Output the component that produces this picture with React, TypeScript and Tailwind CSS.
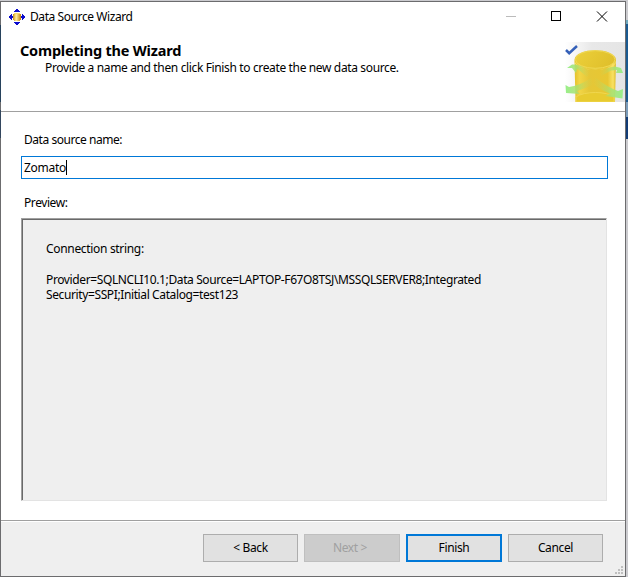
import React from "react";

function AppIcon() {
  return (
    <svg width="16" height="16" viewBox="0 0 16 16" className="ml-2" shapeRendering="crispEdges">
      <defs>
        <linearGradient id="core" x1="0" x2="1">
          <stop offset="0" stopColor="#c98a10" />
          <stop offset="0.4" stopColor="#fff0a0" />
          <stop offset="1" stopColor="#c07c08" />
        </linearGradient>
      </defs>
      <g fill="#0c0ccc">
        <path d="M7 0h2v1h1v1h1v1H5V2h1V1h1zM7 16h2v-1h1v-1h1v-1H5v1h1v1h1z" />
        <path d="M0 7h1V6h1V5h1v2h1v2H3v2H2v-1H1V9H0zM16 7h-1V6h-1V5h-1v2h-1v2h1v2h1v-1h1V9h1z" />
      </g>
      <path d="M5 4h6v1h1v6h-1v1H5v-1H4V5h1z" fill="url(#core)" />
      <path d="M5 4h6v1H5z" fill="#f7d869" />
    </svg>
  );
}

function Banner() {
  return (
    <svg width="60" height="60" viewBox="0 0 60 60" className="shrink-0">
      <defs>
        <linearGradient id="bg" x1="0" x2="1">
          <stop offset="0" stopColor="#fff" />
          <stop offset="0.45" stopColor="#e8e8e8" />
          <stop offset="1" stopColor="#e5e5e5" />
        </linearGradient>
        <linearGradient id="body" x1="0" x2="1">
          <stop offset="0" stopColor="#e4c02a" />
          <stop offset="0.12" stopColor="#f2d546" />
          <stop offset="0.35" stopColor="#e5c737" />
          <stop offset="0.8" stopColor="#e8c732" />
          <stop offset="0.93" stopColor="#f9e164" />
          <stop offset="1" stopColor="#dcb824" />
        </linearGradient>
        <linearGradient id="lid" x1="0" x2="1" y2="0.3">
          <stop offset="0" stopColor="#ecd03a" />
          <stop offset="1" stopColor="#e0c02c" />
        </linearGradient>
        <linearGradient id="gl" x1="0" x2="1">
          <stop offset="0" stopColor="#98ef8a" />
          <stop offset="0.4" stopColor="#a9e070" stopOpacity="0.85" />
          <stop offset="1" stopColor="#d7cc48" stopOpacity="0" />
        </linearGradient>
        <linearGradient id="gr" x1="1" x2="0">
          <stop offset="0" stopColor="#98ef8a" />
          <stop offset="0.4" stopColor="#a9e070" stopOpacity="0.85" />
          <stop offset="1" stopColor="#d7cc48" stopOpacity="0" />
        </linearGradient>
      </defs>
      <path d="M0 0h60v60H0z" fill="url(#bg)" />
      <path d="M9.5 18C9.5 5 51 5 51 18L50 60H10.5z" fill="url(#body)" />
      <path d="M9.5 18c1 13 40.5 13 41.500 0v2c-1 10-40.5 10-41.500 0z" fill="#f6e36c" />
      <ellipse cx="30.2" cy="17.5" rx="19.8" ry="8.8" fill="url(#lid)" stroke="#efd853" />
      <path d="M11 60v-5c8-6 31-6 38 0v5z" fill="#e8cb30" stroke="#f0d74f" />
      <path d="M2 26L7 22.5Q14 22 20 26L26 30 22 35 14 28 12 27 11 31 7 26z" fill="url(#gl)" />
      <path d="M58 31L56 26 50 24.500Q42 25 34 29L36 34 46 28.500 52 28 51 31z" fill="url(#gr)" />
      <path d="M0.500 43L4 45Q14 44 26 36L29 42Q20 47 12 49L15 52 1 51z" fill="url(#gl)" />
      <path d="M58 47L57.500 56.500 40 54 45 51.500Q35 48 27 41L31 36Q42 45 53 49z" fill="url(#gr)" />
      <path d="M1 8l3.200 3.200L12 4" fill="none" stroke="#3560b8" strokeWidth="2.5" />
    </svg>
  );
}

const button = "flex h-7 items-center justify-center border pb-px";

export default function App() {
  return (
    <div
      className="flex h-[577px] w-[628px] bg-[#cbcbcf] pt-px text-[12px] leading-[15px] text-black"
      style={{ fontFamily: '"Noto Sans", "Open Sans", sans-serif' }}
    >
      <div className="flex w-px flex-col bg-[#6c6c6e]">
        <div className="mt-6 h-[77px] bg-[#27425c]" />
        <div className="mt-2 h-[28px] bg-[#33465e]" />
      </div>
      <div className="flex w-[625px] flex-col border border-l-0 border-[#6c6c6e] bg-white whitespace-nowrap">
        <div className="flex h-[29px] items-center">
          <AppIcon />
          <div className="ml-[5px] flex-1 tracking-[-0.42px]">Data Source Wizard</div>
          <svg width="102" height="11" viewBox="0 0 102 11" className="mr-[17px]" fill="none" shapeRendering="crispEdges">
            <path d="M0 5.5h10" stroke="#bbb" />
            <path d="M45.5.5h9v9h-9z" stroke="#000" />
            <path d="M91 .5l10 10M101 .5l-10 10" stroke="#000" shapeRendering="auto" />
          </svg>
        </div>
        <div className="flex h-[81px] border-b border-[#a0a0a0] pt-[11px]">
          <div className="flex-1 pl-[19px]">
            <div className="-mt-px mb-px text-[14.5px] leading-[18px] font-bold tracking-[-0.2px]">Completing the Wizard</div>
            <div className="pl-[25px] tracking-[-0.36px]">Provide a name and then click Finish to create the new data source.</div>
          </div>
          <Banner />
        </div>
        <div className="flex h-[409px] flex-col border-b border-[#a0a0a0] pl-5">
          <div className="mt-5 ml-[3px] tracking-[-0.46px]">Data source name:</div>
          <div className="mt-[9px] flex h-[23px] w-[587px] items-center border border-[#0078d7] pl-[2px]">
            <span className="tracking-[-0.3px]">Zomato</span>
            <span className="h-[15px] w-px bg-black" />
          </div>
          <div className="mt-4 ml-[3px] tracking-[-0.42px]">Preview:</div>
          <div className="mt-2 h-[283px] w-[586px] border border-t-[#a0a0a0] border-r-[#e3e3e3] border-b-[#e3e3e3] border-l-[#a0a0a0]">
            <div className="h-full border-t border-l border-[#696969] bg-[#efefef] pt-[21px] pl-[23px]">
              <div className="tracking-[-0.32px]">Connection string:</div>
              <div className="mt-4 tracking-[-0.385px]">
                Provider=SQLNCLI10.1;Data Source=LAPTOP-F67O8TSJ\MSSQLSERVER8;Integrated
                <br />
                Security=SSPI;Initial Catalog=test123
              </div>
            </div>
          </div>
        </div>
        <div className="relative flex flex-1 justify-end gap-1.5 border-t border-white bg-[#efefef] pt-3 pr-[22px] tracking-[-0.36px]">
          <div className={`${button} w-[95px] border-[#adadad] bg-[#e1e1e1]`}>&lt; Back</div>
          <div className={`${button} w-[96px] border-[#bfbfbf] bg-[#ccc] pr-1 text-[#a0a0a0]`}>Next &gt;</div>
          <div className="flex h-7 w-[96px] items-center justify-center border-2 border-[#0078d7] bg-[#e1e1e1] pb-px">Finish</div>
          <div className={`${button} w-[95px] border-[#adadad] bg-[#e1e1e1]`}>Cancel</div>
          <svg className="absolute right-[2px] bottom-[2px]" width="8" height="8" fill="#bfbfbf" shapeRendering="crispEdges">
            <path d="M6 0h2v2H6zM3 3h2v2H3zM6 3h2v2H6zM0 6h2v2H0zM3 6h2v2H3zM6 6h2v2H6z" />
          </svg>
        </div>
      </div>
      <div className="flex w-0.5 flex-col">
        <div className="h-[19px]" />
        <div className="h-[4px] bg-[#6fa9bd]" />
        <div className="h-[78px] bg-[#1b5a90]" />
        <div className="h-[15px] bg-[#7b9cba]" />
        <div className="h-[22px] bg-[#123c76]" />
      </div>
    </div>
  );
}
